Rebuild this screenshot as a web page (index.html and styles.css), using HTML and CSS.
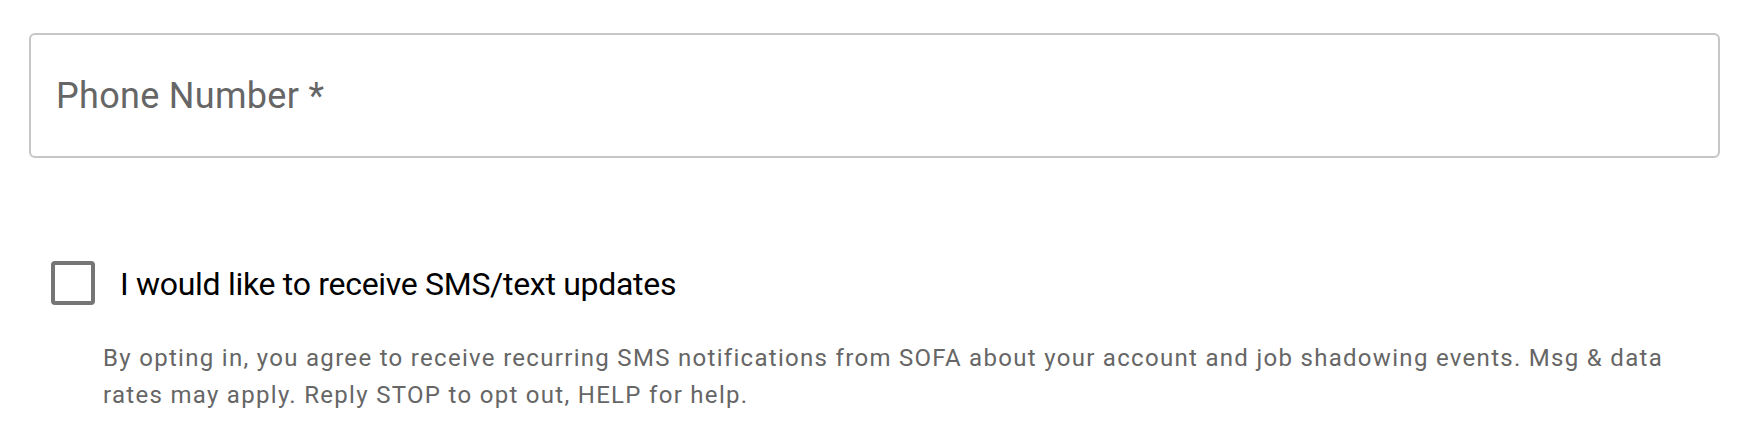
FILE: index.html
```html
<!DOCTYPE html>
<html lang="en">
<head>
<meta charset="utf-8">
<title>Phone Number</title>
<link rel="stylesheet" href="styles.css">
</head>
<body>
<form class="form">
  <div class="field">
    <span class="placeholder">Phone Number *</span>
  </div>
  <div class="consent">
    <label class="check-row">
      <span class="checkbox"></span>
      <span class="label">I would like to receive SMS/text updates</span>
    </label>
    <p class="helper">By opting in, you agree to receive recurring SMS notifications from SOFA about your account and job shadowing events. Msg &amp; data rates may apply. Reply STOP to opt out, HELP for help.</p>
  </div>
</form>
</body>
</html>
```
FILE: styles.css
```css
html, body {
  margin: 0;
  padding: 0;
  background: #ffffff;
}

body {
  font-family: Roboto, "Liberation Sans", sans-serif;
}

.form {
  padding: 33px 32px 0 29px;
  width: 1691px;
}

.field {
  box-sizing: border-box;
  height: 125px;
  border: 2px solid #c6c6c6;
  border-radius: 6px;
  display: flex;
  align-items: center;
  padding-left: 25px;
}

.placeholder {
  font-size: 36px;
  letter-spacing: 0.3px;
  color: #666666;
}

.consent {
  padding-top: 103px;
}

.check-row {
  display: flex;
  align-items: center;
  padding-left: 22px;
}

.checkbox {
  box-sizing: border-box;
  width: 44px;
  height: 44px;
  border: 4px solid #757575;
  border-radius: 4px;
  flex: none;
}

.label {
  margin-left: 25px;
  padding-top: 2px;
  font-size: 32px;
  letter-spacing: -0.3px;
  color: #000000;
}

.helper {
  margin: 35px 0 0 74px;
  font-size: 24px;
  line-height: 37px;
  letter-spacing: 1.3px;
  color: #666666;
}
```
